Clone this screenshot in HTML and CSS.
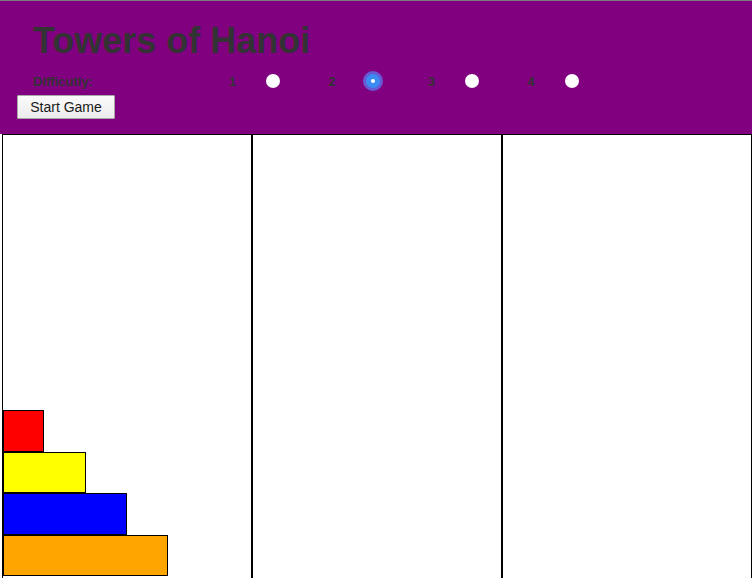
FILE: index.html
```html
<!DOCTYPE html>
<html>
<head>
<meta charset="utf-8">
<title>Towers of Hanoi</title>
<link rel="stylesheet" href="styles.css">
</head>
<body>
<div class="page">
  <header class="header">
    <h1 class="title">Towers of Hanoi</h1>
    <div class="difficulty">
      <span class="difficulty-label">Difficutly:</span>
      <label class="option"><span class="option-num">1</span><input class="radio" type="radio" name="level" value="1"></label>
      <label class="option"><span class="option-num">2</span><input class="radio" type="radio" name="level" value="2" checked></label>
      <label class="option"><span class="option-num">3</span><input class="radio" type="radio" name="level" value="3"></label>
      <label class="option"><span class="option-num">4</span><input class="radio" type="radio" name="level" value="4"></label>
    </div>
    <button class="start-btn" type="button">Start Game</button>
  </header>
  <main class="board">
    <div class="peg">
      <div class="disk disk-red"></div>
      <div class="disk disk-yellow"></div>
      <div class="disk disk-blue"></div>
      <div class="disk disk-orange"></div>
    </div>
    <div class="peg"></div>
    <div class="peg"></div>
  </main>
</div>
</body>
</html>
```
FILE: styles.css
```css
html, body {
  margin: 0;
  padding: 0;
  background: #fff;
}
body {
  font-family: "Liberation Sans", Arial, Helvetica, sans-serif;
  overflow: hidden;
}
.page {
  border-top: 1px solid #7a7a7a;
}
.header {
  background: #800080;
  height: 133px;
  box-sizing: border-box;
  padding: 19px 0 0 17px;
}
.title {
  margin: 0 0 0 16px;
  font-size: 36px;
  line-height: 42px;
  font-weight: bold;
  color: #333;
}
.difficulty {
  display: flex;
  align-items: center;
  height: 16px;
  margin: 11px 0 0 16px;
  color: #333;
  font-size: 13px;
  font-weight: bold;
}
.difficulty-label {
  width: 196px;
}
.option {
  display: flex;
  align-items: center;
  width: 99.5px;
}
.option-num {
  width: 7px;
}
.radio {
  -webkit-appearance: none;
  appearance: none;
  margin: 0 0 0 30px;
  width: 14px;
  height: 14px;
  border-radius: 50%;
  background: radial-gradient(circle at 50% 40%, #ffffff 55%, #e9e9e9 100%);
  border: none;
  box-sizing: border-box;
  position: relative;
}
.radio:checked {
  background: #3a8cf2;
  box-shadow: 0 0 0 3px rgba(95, 120, 240, 0.75);
}
.radio:checked::after {
  content: "";
  position: absolute;
  left: 5px;
  top: 5px;
  width: 4px;
  height: 4px;
  border-radius: 50%;
  background: #fff;
}
.start-btn {
  display: block;
  margin-top: 6px;
  height: 24px;
  width: 98px;
  padding: 0;
  font-family: "Liberation Sans", Arial, Helvetica, sans-serif;
  font-size: 14px;
  color: #1a1a1a;
  background: linear-gradient(#fbfbfb, #ececec);
  border: 1px solid #a9a9a9;
  border-radius: 1px;
}
.board {
  display: flex;
  padding-left: 2px;
}
.peg {
  width: 250px;
  height: 446px;
  box-sizing: border-box;
  border: 1px solid #000;
  display: flex;
  flex-direction: column;
  justify-content: flex-end;
  align-items: flex-start;
  padding: 0 0 3px 0;
}
.disk {
  height: 41.5px;
  box-sizing: border-box;
  border: 1px solid #000;
}
.disk-red { width: 16.667%; background: #ff0000; }
.disk-yellow { width: 33.333%; background: #ffff00; }
.disk-blue { width: 50%; background: #0000ff; }
.disk-orange { width: 66.667%; background: #ffa500; }
```
